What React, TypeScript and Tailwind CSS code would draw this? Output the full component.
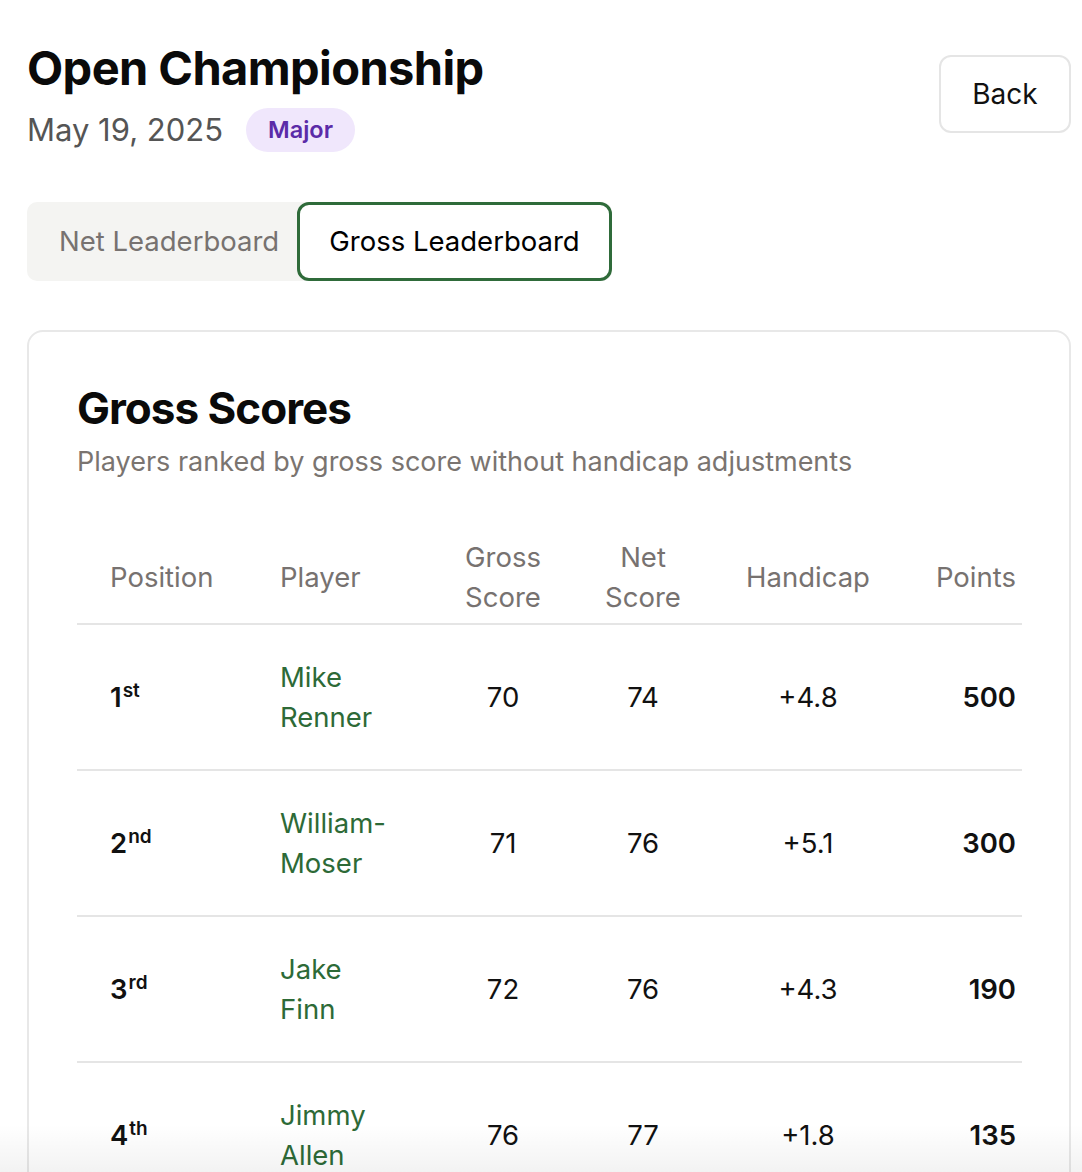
import React from 'react';

interface Row {
  pos: number;
  suffix: string;
  player: string;
  gross: number;
  net: number;
  handicap: string;
  points: number;
}

const rows: Row[] = [
  { pos: 1, suffix: 'st', player: 'Mike Renner', gross: 70, net: 74, handicap: '+4.8', points: 500 },
  { pos: 2, suffix: 'nd', player: 'William-Moser', gross: 71, net: 76, handicap: '+5.1', points: 300 },
  { pos: 3, suffix: 'rd', player: 'Jake Finn', gross: 72, net: 76, handicap: '+4.3', points: 190 },
  { pos: 4, suffix: 'th', player: 'Jimmy Allen', gross: 76, net: 77, handicap: '+1.8', points: 135 },
];

const cols = 'grid grid-cols-[171px_185px_140px_140px_190px_1fr]';

export default function App() {
  return (
    <div
      className="relative h-[1172px] overflow-hidden bg-white pl-[27px] pr-[11px] pt-[40px] text-black"
      style={{ fontFamily: 'Inter, "Noto Sans", sans-serif' }}
    >
      {/* Header */}
      <div className="flex items-start justify-between">
        <div>
          <h1 className="text-[47px] font-bold leading-[56px] tracking-[-0.6px] text-[#0a0a0a]">
            Open Championship
          </h1>
          <div className="mt-[12px] flex items-center gap-[23px]">
            <span className="text-[31px] leading-[44px] text-[#555555]">May 19, 2025</span>
            <span className="flex h-[44px] w-[109px] items-center justify-center rounded-full bg-[#f0e7fc] text-[23.5px] font-semibold text-[#5b2ba8]">
              Major
            </span>
          </div>
        </div>
        <button className="mt-[15px] h-[78px] w-[132px] rounded-[12px] border-2 border-[#e5e5e5] bg-white text-[28px] text-[#111111]">
          Back
        </button>
      </div>

      {/* Tabs */}
      <div className="mt-[50px] flex w-[585px] rounded-[10px] bg-[#f4f4f2]">
        <button className="h-[79px] w-[270px] pl-[32px] text-left text-[27.5px] text-[#777270]">Net Leaderboard</button>
        <button className="h-[79px] w-[315px] rounded-[12px] border-[3px] border-[#2f6b3a] bg-white text-[27.5px] text-black">
          Gross Leaderboard
        </button>
      </div>

      {/* Card */}
      <div className="mt-[49px] rounded-[16px] border-2 border-[#e8e8e8] px-[48px] pt-[48px] pb-[40px]">
        <h2 className="text-[44px] font-bold leading-[56px] tracking-[-1px] text-[#0a0a0a]">Gross Scores</h2>
        <p className="mt-[6px] text-[27px] text-[#7a7470]">
          Players ranked by gross score without handicap adjustments
        </p>

        <div className="mt-[47px] w-[945px]">
          {/* Table header */}
          <div className={`${cols} items-center border-b-2 border-[#e5e5e5] pt-[7px] pb-[6px] text-[27.5px] leading-[40px] text-[#777270]`}>
            <div className="pl-[33px]">Position</div>
            <div className="pl-[32px]">Player</div>
            <div className="px-[28px] text-center">Gross Score</div>
            <div className="px-[28px] text-center">Net Score</div>
            <div className="text-center">Handicap</div>
            <div className="pr-[6px] text-right">Points</div>
          </div>

          {rows.map((r) => (
            <div
              key={r.pos}
              className={`${cols} items-center border-b-2 border-[#e5e5e5] py-[32px] text-[27.5px] leading-[40px] text-[#111111]`}
            >
              <div className="pl-[33px] font-semibold">
                {r.pos}
                <sup className="ml-[1px] text-[19px] font-semibold">{r.suffix}</sup>
              </div>
              <div className="pl-[32px]">
                <div className="w-[112px] text-[#2d6a37]">{r.player}</div>
              </div>
              <div className="text-center">{r.gross}</div>
              <div className="text-center">{r.net}</div>
              <div className="text-center">{r.handicap}</div>
              <div className="pr-[6px] text-right font-semibold">{r.points}</div>
            </div>
          ))}
        </div>
      </div>

      {/* bottom fade */}
      <div className="pointer-events-none absolute inset-x-0 bottom-0 h-[48px] bg-gradient-to-b from-transparent to-black/5" />
    </div>
  );
}
